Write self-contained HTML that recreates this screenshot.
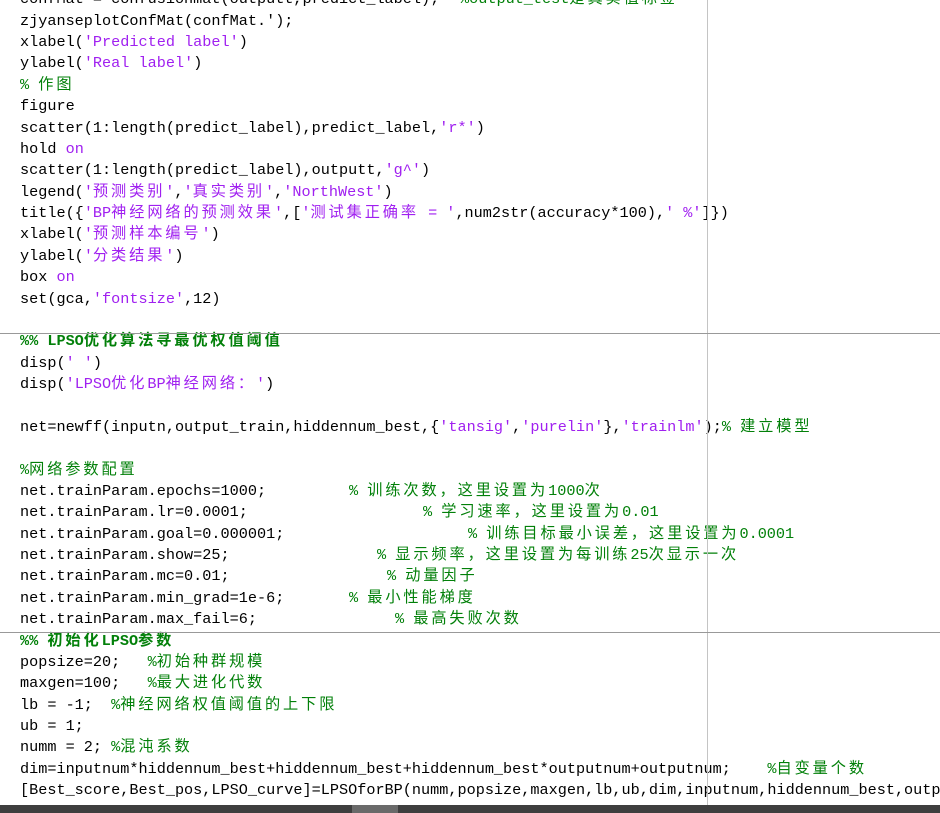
<!DOCTYPE html>
<html><head><meta charset="utf-8"><style>
html,body{margin:0;padding:0;width:940px;height:813px;overflow:hidden;background:#fff;}
#ed{position:absolute;left:20px;top:-10.7px;font-family:"Liberation Mono","Noto Sans CJK SC",monospace;font-size:15.2px;line-height:21.38px;color:#000;}
.l{position:relative;height:21.38px;white-space:pre;}
.s{color:#a020f0}.g{color:#028009}.b{color:#028009;font-weight:bold}
.c{letter-spacing:2.9px}
.a{position:absolute;top:0}
#v{position:absolute;left:707px;top:0;width:1px;height:805px;background:#c4c4c4}
.h{position:absolute;left:0;width:940px;height:1px;background:#999}
#sb{position:absolute;left:0;top:805px;width:940px;height:8px;background:#3e3e3e}
#th{position:absolute;left:352px;top:805px;width:46px;height:8px;background:#6a6a6a}
</style></head><body>
<div id="ed"><div class="l">confMat = confusionmat(outputt,predict_label);<span class="a g" style="left:440px">%output_test<span class="c">是真实值标签</span></span></div><div class="l">zjyanseplotConfMat(confMat.');</div><div class="l">xlabel(<span class="s">'Predicted label'</span>)</div><div class="l">ylabel(<span class="s">'Real label'</span>)</div><div class="l"><span class="g">% <span class="c">作图</span></span></div><div class="l">figure</div><div class="l">scatter(1:length(predict_label),predict_label,<span class="s">'r*'</span>)</div><div class="l">hold <span class="s">on</span></div><div class="l">scatter(1:length(predict_label),outputt,<span class="s">'g^'</span>)</div><div class="l">legend(<span class="s">'<span class="c">预测类别</span>'</span>,<span class="s">'<span class="c">真实类别</span>'</span>,<span class="s">'NorthWest'</span>)</div><div class="l">title({<span class="s">'BP<span class="c">神经网络的预测效果</span>'</span>,[<span class="s">'<span class="c">测试集正确率</span> = '</span>,num2str(accuracy*100),<span class="s">' %'</span>]})</div><div class="l">xlabel(<span class="s">'<span class="c">预测样本编号</span>'</span>)</div><div class="l">ylabel(<span class="s">'<span class="c">分类结果</span>'</span>)</div><div class="l">box <span class="s">on</span></div><div class="l">set(gca,<span class="s">'fontsize'</span>,12)</div><div class="l"> </div><div class="l"><span class="b">%% LPSO<span class="c">优化算法寻最优权值阈值</span></span></div><div class="l">disp(<span class="s">' '</span>)</div><div class="l">disp(<span class="s">'LPSO<span class="c">优化</span>BP<span class="c">神经网络：</span>'</span>)</div><div class="l"> </div><div class="l">net=newff(inputn,output_train,hiddennum_best,{<span class="s">'tansig'</span>,<span class="s">'purelin'</span>},<span class="s">'trainlm'</span>);<span class="g">% <span class="c">建立模型</span></span></div><div class="l"> </div><div class="l"><span class="g">%<span class="c">网络参数配置</span></span></div><div class="l">net.trainParam.epochs=1000;<span class="a g" style="left:329px">% <span class="c">训练次数，这里设置为</span>1000<span class="c">次</span></span></div><div class="l">net.trainParam.lr=0.0001;<span class="a g" style="left:403px">% <span class="c">学习速率，这里设置为</span>0.01</span></div><div class="l">net.trainParam.goal=0.000001;<span class="a g" style="left:448px">% <span class="c">训练目标最小误差，这里设置为</span>0.0001</span></div><div class="l">net.trainParam.show=25;<span class="a g" style="left:357px">% <span class="c">显示频率，这里设置为每训练</span>25<span class="c">次显示一次</span></span></div><div class="l">net.trainParam.mc=0.01;<span class="a g" style="left:367px">% <span class="c">动量因子</span></span></div><div class="l">net.trainParam.min_grad=1e-6;<span class="a g" style="left:329px">% <span class="c">最小性能梯度</span></span></div><div class="l">net.trainParam.max_fail=6;<span class="a g" style="left:375px">% <span class="c">最高失败次数</span></span></div><div class="l"><span class="b">%% <span class="c">初始化</span>LPSO<span class="c">参数</span></span></div><div class="l">popsize=20;   <span class="g">%<span class="c">初始种群规模</span></span></div><div class="l">maxgen=100;   <span class="g">%<span class="c">最大进化代数</span></span></div><div class="l">lb = -1;  <span class="g">%<span class="c">神经网络权值阈值的上下限</span></span></div><div class="l">ub = 1;</div><div class="l">numm = 2; <span class="g">%<span class="c">混沌系数</span></span></div><div class="l">dim=inputnum*hiddennum_best+hiddennum_best+hiddennum_best*outputnum+outputnum;    <span class="g">%<span class="c">自变量个数</span></span></div><div class="l">[Best_score,Best_pos,LPSO_curve]=LPSOforBP(numm,popsize,maxgen,lb,ub,dim,inputnum,hiddennum_best,outputnum</div></div>
<div id="v"></div>
<div class="h" style="top:333px"></div>
<div class="h" style="top:632px"></div>
<div id="sb"></div><div id="th"></div>
</body></html>
